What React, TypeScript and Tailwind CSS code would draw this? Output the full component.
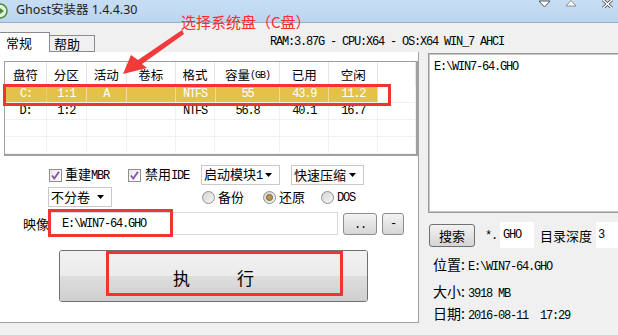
import { ReactNode } from "react"

function M({ children, className = "" }: { children: ReactNode, className?: string }) {
  return <span className={"font-['Liberation_Mono',monospace] text-[12px] tracking-[-1.2px] whitespace-pre " + className}>{children}</span>
}

function Check() {
  return (
    <span className="w-[13px] h-[13px] border border-[#8f8f8f] bg-linear-to-br from-[#e8e8e8] to-white flex items-center justify-center">
      <svg width="9" height="9" viewBox="0 0 9 9"><path d="M1 4.5 L3.3 7.5 L8 0.8" stroke="#8a4fa8" strokeWidth="1.8" fill="none" /></svg>
    </span>
  )
}

function Radio({ on = false }: { on?: boolean }) {
  return (
    <span className="w-[13px] h-[13px] rounded-full border border-[#8e8f8f] bg-linear-to-br from-[#d2d2d2] to-[#f7f7f7] flex items-center justify-center">
      {on && <span className="w-[7px] h-[7px] rounded-full bg-[#b8964c] border border-[#7a6330]" />}
    </span>
  )
}

function Arrow() {
  return <svg width="7" height="4" viewBox="0 0 7 4"><path d="M0 0 H7 L3.5 4 Z" fill="#000" /></svg>
}

function Select({ className, children }: { className: string, children: ReactNode }) {
  return (
    <div className={"h-[20px] border border-[#c9c9c9] bg-white flex items-center justify-between pl-[2px] pr-[7px] " + className}>
      <span className="text-[13px] leading-[18px]">{children}</span>
      <Arrow />
    </div>
  )
}

const colW = ["w-[42px]", "w-[40px]", "w-[40px]", "w-[49px]", "w-[40px]", "w-[65px]", "w-[49px]", "w-[49px]", "w-[38px]"]

const rows = [
  ["C:", "1:1", "A", "", "NTFS", "55", "43.9", "11.2", ""],
  ["D:", "1:2", "", "", "NTFS", "56.8", "40.1", "16.7", ""],
  ["", "", "", "", "", "", "", "", ""],
  ["", "", "", "", "", "", "", "", ""],
]

function App() {
  return (
    <div className="relative w-[618px] h-[335px] overflow-hidden bg-[#f0f0f0] text-black font-['Noto_Sans_CJK_SC',sans-serif] text-[12px] leading-none">
      {/* title bar */}
      <div className="h-[23px] flex items-start bg-linear-to-b from-[#c6ddf4] to-[#bcd5ef] border-b border-[#98adc6]">
        <svg width="8" height="16" viewBox="0 0 8 16" className="mt-[3px]">
          <circle cx="0" cy="8" r="7" fill="#e8f2e0" stroke="#4a8a3a" strokeWidth="1.5" />
          <path d="M0 5 L4 8 L0 11" fill="#3f8f2f" />
        </svg>
        <span className="ml-[8px] mt-[4px] font-['Noto_Sans','Noto_Sans_CJK_SC',sans-serif] text-[12.5px] text-[#1e1e1e]">Ghost安装器 1.4.4.30</span>
        <div className="ml-auto flex items-start">
          <svg width="13" height="8" viewBox="0 0 13 8"><path d="M1 1 H12 L6.5 7 Z" fill="#fff" stroke="#555" strokeWidth="1" /></svg>
          <svg width="12" height="7" viewBox="0 0 12 7" className="ml-[14px]"><path d="M1 6 H11 L6 0.5 Z" fill="#fff" stroke="#777" strokeWidth="0.8" /></svg>
          <svg width="11" height="8" viewBox="0 0 11 8" className="ml-[25px] mr-[5px]"><path d="M1 0 L10 8 M10 0 L1 8" stroke="#444" strokeWidth="3" /><path d="M1 0 L10 8 M10 0 L1 8" stroke="#fff" strokeWidth="1.5" /></svg>
        </div>
      </div>

      {/* tabs + system info */}
      <div className="h-[29px] flex items-end">
        <div className="w-[50px] h-[20px] bg-white border-t border-r border-[#898c95] pl-[6px] pt-[3px] text-[13px]">常规</div>
        <div className="w-[45px] h-[17px] bg-[#f0f0f0] border-t border-r border-b border-[#898c95] pl-[4px] pt-[1px] text-[13px]">帮助</div>
        <div className="self-start mt-[11px] ml-[175px]"><M>RAM:3.87G - CPU:X64 - OS:X64 WIN_7 AHCI</M></div>
      </div>

      <div className="flex">
        {/* left tab panel */}
        <div className="w-[422px] h-[271px] bg-white border-r border-b border-[#a0a0a0] pl-[4px] pt-[9px]">
          <div className="w-[414px] border border-[#a0a0a0] border-b-2 border-r-2 bg-white">
            <div className="flex h-[24px]">
              {["盘符", "分区", "活动", "卷标", "格式", "容量", "已用", "空闲", ""].map((h, i) => (
                <div key={i} className={colW[i] + " border-r border-[#e5e5e5] flex items-center justify-center pt-[3px] text-[12.5px]"}>
                  {h}{i === 5 && <span className="font-['Liberation_Mono',monospace] text-[10px] tracking-[-1px]">(GB)</span>}
                </div>
              ))}
            </div>
            {rows.map((r, ri) => (
              <div key={ri} className="flex h-[17px] border-b border-[#f0f0f0]">
                {r.map((c, ci) => {
                  const sel = ri === 0 && ci < 8
                  return (
                    <div key={ci} className={colW[ci] + " flex items-center justify-center " + (sel ? "bg-[#e4c24a] text-white border-r border-[#f0dc98] " : "border-r border-[#f0f0f0] ") + (ri === 0 && ci === 0 ? "border-l border-dotted border-l-[#2a4fb8]" : "")}>
                      <M>{c}</M>
                    </div>
                  )
                })}
              </div>
            ))}
          </div>

          {/* options */}
          <div className="flex h-[20px] mt-[9px] items-center">
            <div className="w-[79px] ml-[45px] flex items-center gap-[3px]"><Check /><span className="text-[13px] leading-[18px]">重建<M>MBR</M></span></div>
            <div className="w-[73px] flex items-center gap-[4px]"><Check /><span className="text-[13px] leading-[18px]">禁用<M>IDE</M></span></div>
            <Select className="w-[79px]">启动模块<M>1</M></Select>
            <Select className="w-[73px] ml-[11px]">快速压缩</Select>
          </div>
          <div className="flex h-[20px] mt-[2px] items-center">
            <Select className="w-[64px] ml-[44px]">不分卷</Select>
            <div className="ml-[90px] w-[61px] flex items-center gap-[3px]"><Radio /><span className="text-[13px] leading-[18px]">备份</span></div>
            <div className="w-[58px] flex items-center gap-[3px]"><Radio on /><span className="text-[13px] leading-[18px]">还原</span></div>
            <div className="flex items-center gap-[3px]"><Radio /><span className="text-[13px] leading-[18px]"><M>DOS</M></span></div>
          </div>
          <div className="flex h-[23px] mt-[5px] items-center">
            <span className="w-[46px] pl-[19px] text-[13px]">映像</span>
            <div className="w-[288px] h-[23px] border border-[#d9d9d9] bg-white flex items-center pl-[11px]"><M>{"E:\\WIN7-64.GHO"}</M></div>
            <div className="ml-[5px] w-[34px] h-[22px] rounded-[3px] border border-[#8d8d8d] bg-linear-to-b from-[#f3f3f3] to-[#d6d6d6] flex items-center justify-center pt-[3px]"><M>..</M></div>
            <div className="ml-[5px] w-[22px] h-[22px] rounded-[3px] border border-[#8d8d8d] bg-linear-to-b from-[#f3f3f3] to-[#d6d6d6] flex items-center justify-center"><M>-</M></div>
          </div>
          <div className="ml-[55px] mt-[15px] w-[309px] h-[52px] rounded-[3px] border border-[#707070] overflow-hidden flex flex-col relative">
            <div className="h-[26px] bg-linear-to-b from-[#f2f2f2] to-[#ebebeb]" />
            <div className="h-[26px] bg-linear-to-b from-[#dddddd] to-[#cfcfcf]" />
            <div className="absolute inset-0 flex items-center justify-center gap-[47px] text-[17px] pt-[2px]">
              <span>执</span><span>行</span>
            </div>
          </div>
        </div>

        {/* right column */}
        <div className="flex-1 pt-[1px]">
          <div className="ml-[9px] w-[200px] h-[160px] bg-white border border-[#9a9a9a] shadow-[inset_1px_1px_0_#c6c6c6,inset_-1px_-1px_0_#c6c6c6] pl-[5px] pt-[5px]">
            <M>{"E:\\WIN7-64.GHO"}</M>
          </div>
          <div className="mt-[9px] h-[26px] flex items-center">
            <div className="ml-[10px] w-[46px] h-[23px] rounded-[3px] border border-[#707070] bg-linear-to-b from-[#f2f2f2] to-[#d4d4d4] flex items-center justify-center text-[13px] pt-[1px]">搜索</div>
            <span className="ml-[10px]"><M>*.</M></span>
            <div className="ml-[3px] w-[34px] h-[26px] bg-white flex items-center pl-[3px]"><M>GHO</M></div>
            <span className="ml-[6px] text-[13px]">目录深度</span>
            <div className="ml-[4px] w-[30px] h-[26px] bg-white flex items-center pl-[2px]"><M>3</M></div>
          </div>
          <div className="ml-[14px] mt-[9px] h-[16px] flex items-center"><span className="text-[14px] leading-[16px]">位置:<M className="ml-[3px]">{"E:\\WIN7-64.GHO"}</M></span></div>
          <div className="ml-[14px] mt-[11px] h-[16px] flex items-center"><span className="text-[14px] leading-[16px]">大小:<M className="ml-[3px]">3918 MB</M></span></div>
          <div className="ml-[14px] mt-[6px] h-[16px] flex items-center"><span className="text-[14px] leading-[16px]">日期:<M className="ml-[3px]">2016-08-11  17:29</M></span></div>
        </div>
      </div>

      {/* annotations */}
      <span className="absolute left-[181px] top-[14px] text-[15px] text-[#ff2a2a]">选择系统盘（C盘）</span>
      <svg className="absolute left-0 top-0 pointer-events-none" width="618" height="335" viewBox="0 0 618 335">
        <polygon points="123,74 131,55 138,60 182,30 184,34 142,64 147,68" fill="#f23a3a" />
      </svg>
      <div className="absolute left-[3px] top-[84px] w-[388px] h-[22px] border-[3px] border-[#f03434]" />
      <div className="absolute left-[48px] top-[209px] w-[125px] h-[28px] border-[3px] border-[#f03434]" />
      <div className="absolute left-[106px] top-[251px] w-[237px] h-[45px] border-[3px] border-[#f03434]" />
    </div>
  )
}

export default App
